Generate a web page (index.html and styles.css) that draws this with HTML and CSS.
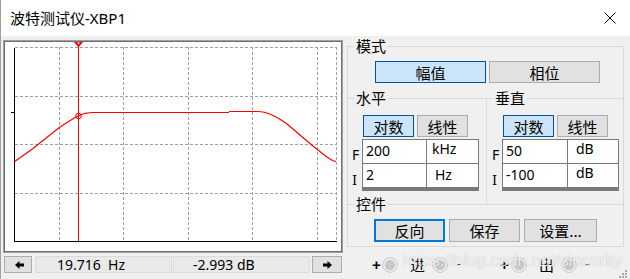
FILE: index.html
```html
<!DOCTYPE html>
<html lang="zh">
<head>
<meta charset="utf-8">
<title>波特测试仪-XBP1</title>
<link rel="stylesheet" href="styles.css">
</head>
<body>
<div class="window">
  <div class="titlebar">
    <span class="title">波特测试仪-XBP1</span>
    <svg class="close" width="12" height="12" viewBox="0 0 12 12"><path d="M0.5 0.5L11.5 11.5M11.5 0.5L0.5 11.5" stroke="#000" stroke-width="1" fill="none"/></svg>
  </div>
  <div class="main">
    <div class="left">
      <div class="scope">
        <svg class="plot" width="338" height="211" viewBox="4 41 338 211">
          <g stroke="#a0a0a0" stroke-width="1" stroke-dasharray="3 2" fill="none" shape-rendering="crispEdges">
            <path d="M15 47.5H337M15 96.5H337M15 144.5H337M15 193.5H337"/>
            <path d="M59.5 47V241M123.5 47V241M188.5 47V241M252.5 47V241M317.5 47V241M336.5 47V241"/>
          </g>
          <path d="M14.5 48V241.5H337" stroke="#000" stroke-width="1" fill="none" shape-rendering="crispEdges"/>
          <path d="M11 112.5H14" stroke="#000" stroke-width="1" shape-rendering="crispEdges"/>
          <polyline fill="none" stroke="#f00" stroke-width="1.2" points="14,162 33,148.5 60,127 75,117.5 78,116 85,113.3 92,112.5"/>
          <path d="M92 112.5H229M229 111.5H258" stroke="#f00" stroke-width="1" fill="none" shape-rendering="crispEdges"/>
          <polyline fill="none" stroke="#f00" stroke-width="1.2" points="258,111.5 263,112 267,113 272,115 277,117.5 282,120.5 287,124 293,129 300,135 307,141 313,146 318,150 323,154 327,157 330,159 333,160.8 336,161.5"/>
          <path d="M78.5 44V241" stroke="#f00" stroke-width="1" shape-rendering="crispEdges"/>
          <path d="M74 42H83L78.5 47.5Z" fill="#f00"/>
          <path d="M77 42.5H80L78.5 44.5Z" fill="#fff"/>
          <circle cx="78.5" cy="116" r="2.8" fill="none" stroke="#f00" stroke-width="1"/>
        </svg>
      </div>
      <div class="readout">
        <div class="btn arrow first">
          <svg width="9" height="8" viewBox="0 0 9 8"><path d="M0 4L4.5 0V2.5H9V5.5H4.5V8Z" fill="#000"/></svg>
        </div>
        <div class="value v1">19.716&nbsp; Hz</div>
        <div class="value v2">-2.993 dB</div>
        <div class="btn arrow last">
          <svg width="9" height="8" viewBox="0 0 9 8"><path d="M9 4L4.5 0V2.5H0V5.5H4.5V8Z" fill="#000"/></svg>
        </div>
      </div>
    </div>
    <div class="right">
      <fieldset class="grp mode">
        <legend>模式</legend>
        <div class="btnrow moderow">
          <div class="btn sel wide">幅值</div>
          <div class="btn wide">相位</div>
        </div>
      </fieldset>
      <div class="axes">
        <fieldset class="grp horiz">
          <legend>水平</legend>
          <div class="btnrow scalerow">
            <div class="btn sel small">对数</div>
            <div class="btn small">线性</div>
          </div>
          <div class="inputs">
            <div class="labels">
              <span class="lab f">F</span>
              <span class="lab i">I</span>
            </div>
            <div class="fields fh">
              <div class="cell num">200</div>
              <div class="cell unit uk">kHz</div>
              <div class="cell num">2</div>
              <div class="cell unit uh">Hz</div>
            </div>
          </div>
        </fieldset>
        <fieldset class="grp vert">
          <legend>垂直</legend>
          <div class="btnrow scalerow">
            <div class="btn sel small">对数</div>
            <div class="btn small">线性</div>
          </div>
          <div class="inputs">
            <div class="labels">
              <span class="lab f">F</span>
              <span class="lab i">I</span>
            </div>
            <div class="fields fv">
              <div class="cell num">50</div>
              <div class="cell unit ud">dB</div>
              <div class="cell num">-100</div>
              <div class="cell unit ud">dB</div>
            </div>
          </div>
        </fieldset>
      </div>
      <fieldset class="grp ctrl">
        <legend>控件</legend>
        <div class="btnrow ctrlrow">
          <div class="btn focus cb">反向</div>
          <div class="btn cb">保存</div>
          <div class="btn cb wider">设置...</div>
        </div>
      </fieldset>
      <div class="terminals">
        <span class="pm plus p1">+</span>
        <svg class="term t1" width="16" height="16" viewBox="0 0 16 16"><circle cx="8" cy="8" r="7.3" fill="#f4f4f4" stroke="#c4c4c4" stroke-width="1"/><circle cx="8" cy="8" r="5.3" fill="#c8c8c8"/></svg>
        <span class="tl tl1">进</span>
        <svg class="term t2" width="16" height="16" viewBox="0 0 16 16"><circle cx="8" cy="8" r="7.3" fill="#f4f4f4" stroke="#c4c4c4" stroke-width="1"/><circle cx="8" cy="8" r="5.3" fill="#c8c8c8"/></svg>
        <span class="pm minus m1">-</span>
        <span class="pm plus p2">+</span>
        <svg class="term t3" width="16" height="16" viewBox="0 0 16 16"><circle cx="8" cy="8" r="7.3" fill="#f4f4f4" stroke="#c4c4c4" stroke-width="1"/><circle cx="8" cy="8" r="5.3" fill="#c8c8c8"/></svg>
        <span class="tl tl2">出</span>
        <svg class="term t4" width="16" height="16" viewBox="0 0 16 16"><circle cx="8" cy="8" r="7.3" fill="#f4f4f4" stroke="#c4c4c4" stroke-width="1"/><circle cx="8" cy="8" r="5.3" fill="#c8c8c8"/></svg>
        <span class="pm minus m2">-</span>
      </div>
    </div>
  </div>
  <div class="watermark">https://blog.csdn.net/sincerity</div>
  <svg class="grip" width="9" height="9" viewBox="0 0 9 9">
    <g fill="#a8a8a8">
      <rect x="6" y="0" width="2" height="2"/>
      <rect x="3" y="3" width="2" height="2"/>
      <rect x="6" y="3" width="2" height="2"/>
      <rect x="0" y="6" width="2" height="2"/>
      <rect x="3" y="6" width="2" height="2"/>
      <rect x="6" y="6" width="2" height="2"/>
    </g>
  </svg>
</div>
</body>
</html>
```

FILE: styles.css
```css
* { box-sizing: border-box; }
html, body { margin: 0; padding: 0; }
body {
  background: #f0f0f0;
  font-family: "Noto Sans", "Noto Sans CJK SC", sans-serif;
  color: #000;
}
.window {
  position: relative;
  width: 630px;
  height: 279px;
  overflow: hidden;
  background: #f0f0f0;
  border-left: 1px solid #a0a0a0;
}
.titlebar {
  height: 36px;
  background: #fff;
  display: flex;
  align-items: center;
  justify-content: space-between;
  padding: 0 14px 0 9px;
}
.title {
  font-size: 15px;
  line-height: 20px;
}
.close { display: block; }

.main {
  display: flex;
  height: 243px;
  padding-left: 2px;
}
.left {
  width: 340px;
  display: flex;
  flex-direction: column;
}
.scope {
  margin-top: 4px;
  height: 213px;
  border: 1px solid #a0a0a0;
  box-shadow: inset 0 0 0 1px #6f6f6f;
  background: #fff;
}
.plot { display: block; }

.readout {
  display: flex;
  margin-top: 3px;
  height: 17px;
}
.btn {
  display: flex;
  align-items: center;
  justify-content: center;
  background: #e1e1e1;
  border: 1px solid #adadad;
  font-family: "Noto Sans CJK SC", sans-serif;
  font-size: 15px;
  line-height: 1;
}
.btn.sel {
  background: #cce4f7;
  border-color: #005499;
}
.btn.focus {
  border: 2px solid #0078d7;
}
.arrow.first { width: 28px; margin-left: 1px; padding-left: 2px; }
.arrow.last { width: 30px; margin-left: 2px; }
.arrow svg { display: block; }
.value {
  width: 137px;
  background: #e9e9e9;
  border: 1px solid #dcdcdc;
  font-size: 14px;
  line-height: 15px;
  padding-left: 21px;
  white-space: pre;
}
.v1 { margin-left: 3px; }
.v2 { margin-left: 1px; padding-left: 19px; }

.right {
  width: 277px;
  margin-left: 4px;
  display: flex;
  flex-direction: column;
}
.grp {
  margin: 0;
  padding: 0;
  min-width: 0;
  border: 1px solid #d9d9d9;
}
.grp legend {
  margin-left: 6px;
  padding: 0 2px;
  font-family: "Noto Sans CJK SC", sans-serif;
  font-size: 15px;
  line-height: 20px;
  height: 20px;
}
.mode {
  width: 277px;
  height: 62px;
  border-bottom: none;
}
.btnrow { display: flex; }
.moderow { margin-top: 5px; margin-left: 27px; gap: 3px; }
.btn.wide { width: 111px; height: 22px; }

.axes {
  display: flex;
  margin-top: -10px;
}
.horiz {
  width: 140px;
  height: 116px;
  border-bottom: none;
}
.vert {
  width: 137px;
  height: 116px;
  border-left: none;
  border-bottom: none;
}
.scalerow { margin-top: 7px; gap: 3px; }
.horiz .scalerow { margin-left: 15px; }
.vert .scalerow { margin-left: 16px; }
.btn.small { width: 51px; height: 22px; }

.inputs {
  display: flex;
  margin-top: 2px;
}
.labels {
  display: flex;
  flex-direction: column;
  padding-top: 4px;
  font-size: 14px;
}
.horiz .labels { width: 14px; padding-left: 4px; }
.vert .labels { width: 15px; padding-left: 5px; }
.lab { display: block; line-height: 24px; height: 24px; }
.lab.i { font-family: "DejaVu Serif", serif; font-size: 13px; padding-top: 2px; }
.fields {
  display: grid;
  gap: 1px;
  padding: 1px;
  background: #7a7a7a;
  width: 117px;
  grid-template-rows: 23px 23px;
}
.fh { grid-template-columns: 63px 51px; }
.fv { grid-template-columns: 64px 50px; }
.cell {
  background: #fff;
  font-size: 14px;
  line-height: 22px;
}
.cell.num { padding-left: 3px; }
.cell.unit { line-height: 18px; }
.cell.uk { padding-left: 5px; }
.cell.uh { padding-left: 8px; line-height: 22px; }
.cell.ud { padding-left: 8px; }

.ctrl {
  width: 277px;
  height: 53px;
  margin-top: -10px;
}
.ctrlrow { margin-top: 5px; margin-left: 26px; gap: 4px; }
.btn.cb { width: 71px; height: 23px; }
.btn.cb.wider { width: 73px; }

.terminals {
  display: flex;
  align-items: center;
  height: 32px;
  padding-top: 4px;
}
.pm {
  font-family: "Liberation Sans", sans-serif;
  font-size: 15px;
  font-weight: bold;
  line-height: 16px;
  text-align: center;
}
.plus { width: 8px; }
.minus { width: 7px; margin-top: -3px; font-weight: normal; }
.p1 { margin-left: 25px; }
.t1 { margin-left: 2px; }
.tl {
  font-family: "Noto Sans CJK SC", sans-serif;
  font-size: 15px;
  line-height: 16px;
  width: 15px;
}
.tl1 { margin-left: 12px; }
.t2 { margin-left: 7px; }
.m1 { margin-left: 7px; }
.p2 { margin-left: 38px; }
.t3 { margin-left: 3px; }
.tl2 { margin-left: 12px; }
.t4 { margin-left: 7px; }
.m2 { margin-left: 7px; }
.term { display: block; }

.watermark {
  position: absolute;
  left: 402px;
  top: 251px;
  font-family: "Liberation Sans", sans-serif;
  font-size: 17px;
  line-height: 20px;
  color: rgba(255, 255, 255, 0.8);
  text-shadow: 0 0 1px rgba(90, 90, 90, 0.45);
  white-space: nowrap;
  pointer-events: none;
}
.grip {
  position: absolute;
  right: 2px;
  bottom: 0;
}
```
